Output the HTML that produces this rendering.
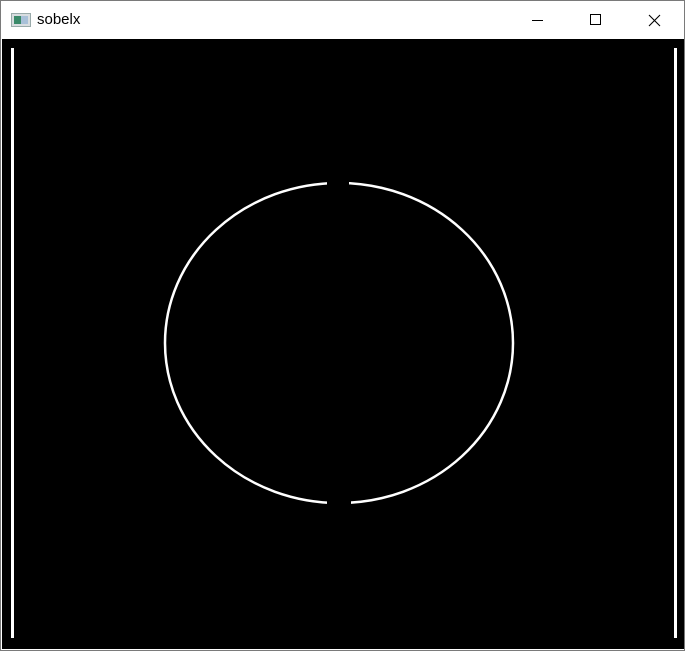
<!DOCTYPE html>
<html><head><style>
html,body{margin:0;padding:0;width:685px;height:651px;overflow:hidden;background:#fff}
.win{position:absolute;left:0;top:0;width:683px;height:649px;border:1px solid #7a7a7a;background:#fff}
.t{position:absolute;left:36px;top:10px;font:15px "Liberation Sans",sans-serif;color:#000}
.c{position:absolute;left:1px;top:38px;width:682px;height:610px;background:#000}
</style></head><body>
<div class="win">
<svg style="position:absolute;left:10px;top:12px" width="20" height="14"><rect x="0.5" y="0.5" width="19" height="13" fill="#d8dde0" stroke="#9aa"/><rect x="3" y="3" width="7" height="8" fill="#3a8a6a"/><rect x="10" y="3" width="7" height="8" fill="#a8c0d8"/></svg>
<div class="t">sobelx</div>
<svg style="position:absolute;left:520px;top:8px" width="160" height="24"><line x1="11" y1="11.5" x2="22" y2="11.5" stroke="#000"/><rect x="69.5" y="5.5" width="10" height="10" fill="none" stroke="#000"/><path d="M128 6 L139 17 M139 6 L128 17" stroke="#000" stroke-width="1.1"/></svg>
<div class="c">
<svg width="682" height="610" style="position:absolute;left:0;top:0">
<rect x="9" y="9" width="3" height="590" fill="#fff"/>
<rect x="672" y="9" width="3" height="590" fill="#fff"/>
<ellipse cx="337" cy="304" rx="174" ry="160" fill="none" stroke="#fff" stroke-width="2.5"/>
<rect x="325" y="138" width="22" height="12" fill="#000"/>
<rect x="325" y="458" width="24" height="12" fill="#000"/>
</svg>
</div>
</div>
</body></html>
